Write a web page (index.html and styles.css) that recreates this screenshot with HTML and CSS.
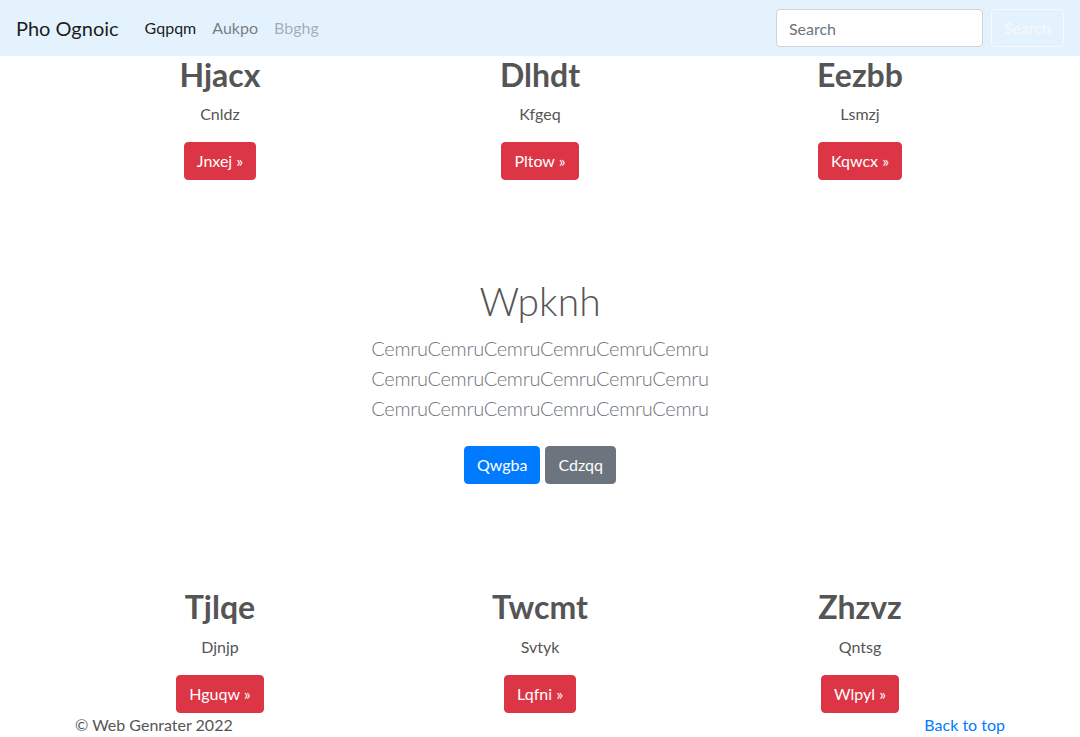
FILE: index.html
```html
<!DOCTYPE html>
<html lang="en">
<head>
<meta charset="utf-8">
<title>Pho Ognoic</title>
<link rel="stylesheet" href="styles.css">
</head>
<body>
<nav class="navbar">
  <a class="brand" href="#">Pho Ognoic</a>
  <ul class="nav">
    <li><a class="nav-link active" href="#">Gqpqm</a></li>
    <li><a class="nav-link" href="#">Aukpo</a></li>
    <li><a class="nav-link disabled" href="#">Bbghg</a></li>
  </ul>
  <form class="search">
    <input class="search-input" type="text" placeholder="Search">
    <button class="search-btn" type="button">Search</button>
  </form>
</nav>

<main>
  <div class="container">
    <div class="row">
      <div class="col">
        <h2 class="card-title">Hjacx</h2>
        <p class="card-text">Cnldz</p>
        <p class="card-action"><a class="btn btn-danger" href="#">Jnxej &raquo;</a></p>
      </div>
      <div class="col">
        <h2 class="card-title">Dlhdt</h2>
        <p class="card-text">Kfgeq</p>
        <p class="card-action"><a class="btn btn-danger" href="#">Pltow &raquo;</a></p>
      </div>
      <div class="col">
        <h2 class="card-title">Eezbb</h2>
        <p class="card-text">Lsmzj</p>
        <p class="card-action"><a class="btn btn-danger" href="#">Kqwcx &raquo;</a></p>
      </div>
    </div>
  </div>

  <section class="hero">
    <div class="hero-inner">
      <h1 class="hero-title">Wpknh</h1>
      <p class="lead">CemruCemruCemruCemruCemruCemru CemruCemruCemruCemruCemruCemru CemruCemruCemruCemruCemruCemru</p>
      <p class="hero-actions">
        <a class="btn btn-primary" href="#">Qwgba</a>
        <a class="btn btn-secondary" href="#">Cdzqq</a>
      </p>
    </div>
  </section>

  <div class="container">
    <div class="row">
      <div class="col">
        <h2 class="card-title">Tjlqe</h2>
        <p class="card-text">Djnjp</p>
        <p class="card-action last"><a class="btn btn-danger" href="#">Hguqw &raquo;</a></p>
      </div>
      <div class="col">
        <h2 class="card-title">Twcmt</h2>
        <p class="card-text">Svtyk</p>
        <p class="card-action last"><a class="btn btn-danger" href="#">Lqfni &raquo;</a></p>
      </div>
      <div class="col">
        <h2 class="card-title">Zhzvz</h2>
        <p class="card-text">Qntsg</p>
        <p class="card-action last"><a class="btn btn-danger" href="#">Wlpyl &raquo;</a></p>
      </div>
    </div>
  </div>
</main>

<footer class="footer">
  <p class="copy">&copy; Web Genrater 2022</p>
  <a class="top-link" href="#">Back to top</a>
</footer>
</body>
</html>
```
FILE: styles.css
```css
* { box-sizing: border-box; }

html, body {
  margin: 0;
  padding: 0;
}

body {
  font-family: "Lato", "Noto Sans", sans-serif;
  font-size: 16px;
  line-height: 1.5;
  color: #555;
  background: #fff;
}

a { text-decoration: none; }

p { margin: 0; }

/* Navbar */
.navbar {
  display: flex;
  align-items: center;
  height: 56px;
  padding: 8px 16px;
  background: #e3f2fd;
}

.brand {
  font-size: 20px;
  line-height: 30px;
  padding: 5px 0;
  margin-right: 18px;
  color: rgba(0, 0, 0, 0.9);
}

.nav {
  display: flex;
  list-style: none;
  margin: 0;
  padding: 0;
  flex: 1;
}

.nav-link {
  display: block;
  padding: 8px;
  color: rgba(0, 0, 0, 0.5);
}

.nav-link.active { color: rgba(0, 0, 0, 0.9); }
.nav-link.disabled { color: rgba(0, 0, 0, 0.3); }

.search {
  display: flex;
  align-items: center;
  gap: 8px;
}

.search-input {
  width: 207px;
  height: 38px;
  padding: 6px 12px;
  font: inherit;
  font-size: 16px;
  color: #495057;
  background: #fff;
  border: 1px solid #ced4da;
  border-radius: 4px;
}

.search-input::placeholder { color: #6c757d; }

.search-btn {
  height: 38px;
  padding: 6px 12px;
  font: inherit;
  font-size: 16px;
  color: #f8f9fa;
  background: transparent;
  border: 1px solid #f8f9fa;
  border-radius: 4px;
}

/* Layout */
.container {
  width: 960px;
  margin: 0 auto;
}

.row {
  display: flex;
}

.col {
  flex: 1;
  padding: 0 15px;
  text-align: center;
}

.card-title {
  margin: 0 0 8px;
  font-size: 32px;
  font-weight: 700;
  line-height: 1.2;
  color: #555;
}

.card-text { margin-bottom: 16px; }

.card-action { margin-bottom: 16px; }
.card-action.last { margin-bottom: 0; }

/* Buttons */
.btn {
  display: inline-block;
  padding: 6px 12px;
  font-size: 16px;
  line-height: 24px;
  border: 1px solid transparent;
  border-radius: 4px;
  color: #fff;
}

.btn-danger { background: #dc3545; border-color: #dc3545; }
.btn-primary { background: #007bff; border-color: #007bff; }
.btn-secondary { background: #6c757d; border-color: #6c757d; }

/* Hero */
.hero {
  padding: 33px 0 48px;
  margin-bottom: 56px;
  text-align: center;
}

.hero-inner {
  width: 960px;
  margin: 0 auto;
  padding: 48px 0 0;
}

.hero-title {
  margin: 0 0 8px;
  font-size: 39px;
  font-weight: 300;
  line-height: 48px;
  color: #555;
}

.lead {
  width: 360px;
  margin: 0 auto 16px;
  font-size: 20px;
  font-weight: 300;
  line-height: 30px;
  letter-spacing: -0.3px;
  color: #6c757d;
}

.hero-actions {
  display: flex;
  justify-content: center;
  gap: 5px;
  margin-top: 23px;
}

/* Footer */
.footer {
  width: 960px;
  margin: 0 auto;
  padding: 0 15px;
  display: flex;
  justify-content: space-between;
}

.top-link { color: #007bff; }
```
